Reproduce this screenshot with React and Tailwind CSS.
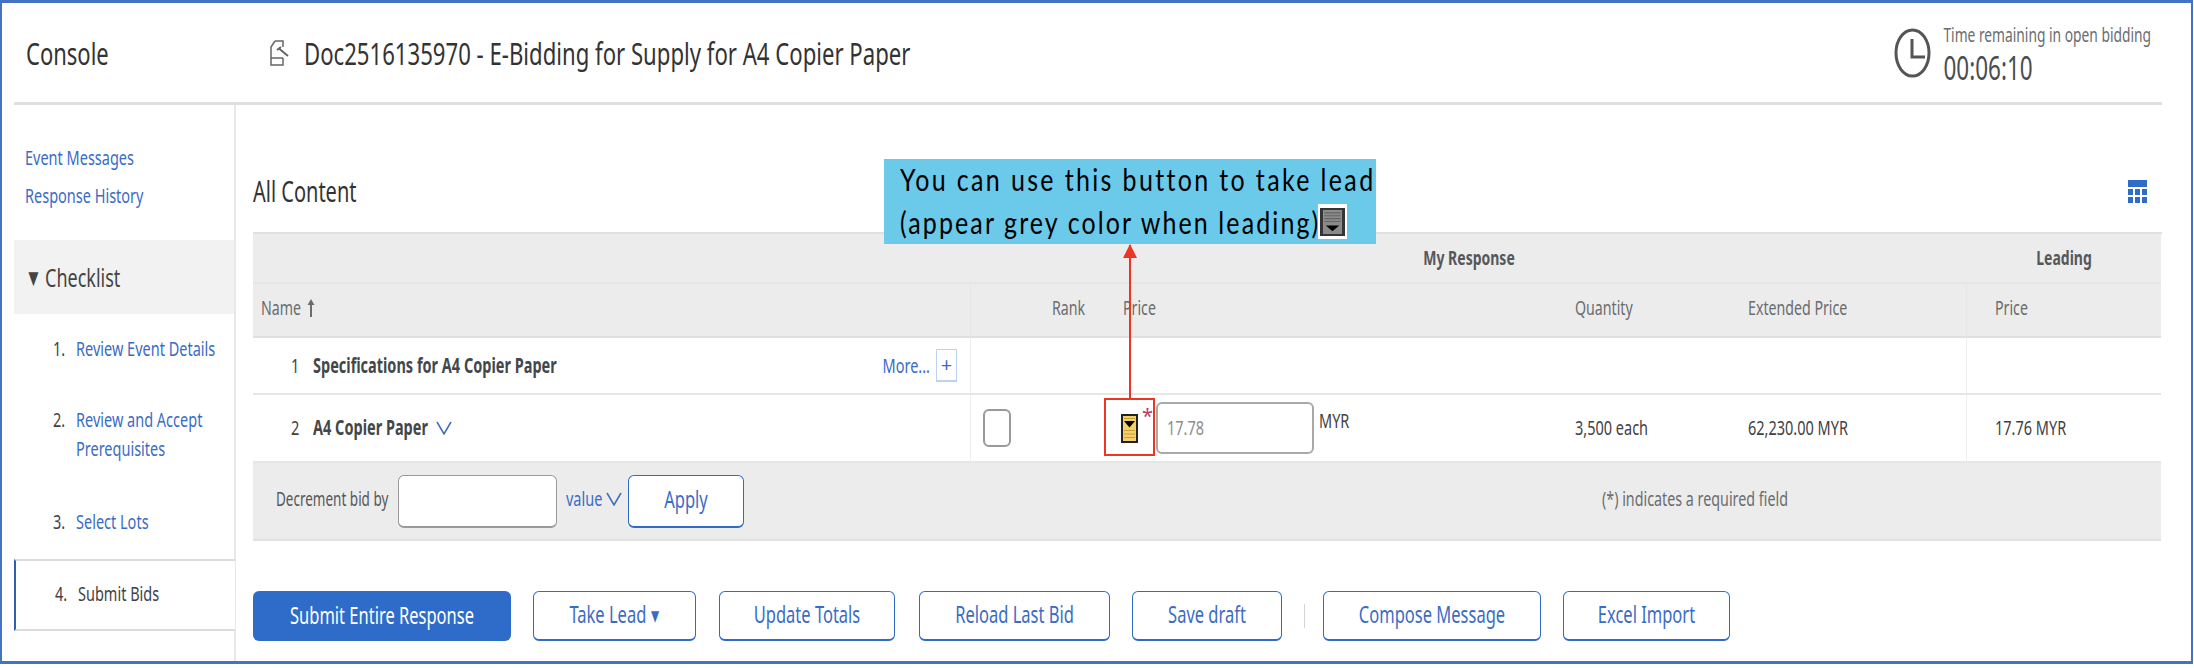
const link = "text-[#3a6cc4]";
const dark = "text-[#3f4144]";

function T({ className = "", children }) {
  return <span className={`inline-block scale-y-[1.42] whitespace-nowrap ${className}`}>{children}</span>;
}

function Chevron({ className = "" }) {
  return (
    <svg className={className} width="16" height="14" viewBox="0 0 16 14" fill="none" stroke="#3a6cc4" strokeWidth="1.5">
      <path d="M1 1 L8 13 L15 1" />
    </svg>
  );
}

function LeadIcon({ grey = false }) {
  const fill = grey ? "#8a8a8a" : "#f4cf6b";
  const line = grey ? "#666" : "#c9a030";
  const frame = grey ? "#333" : "#222";
  return (
    <svg className="shrink-0" width={grey ? 25 : 17} height={grey ? 28 : 29} viewBox="0 0 17 29" preserveAspectRatio="none">
      <rect x="1" y="1" width="15" height="27" fill={fill} stroke={frame} strokeWidth="2" />
      <path d={grey ? "M3 5H14M3 8H14M3 11H14M3 14H14" : "M3 4.5H14M3 16.5H14M3 20H14M3 23.5H14"} stroke={line} strokeWidth="1.2" />
      <path d={grey ? "M4 18H13L8.5 24Z" : "M3 7H14L8.5 13.5Z"} fill="#000" />
    </svg>
  );
}

function Btn({ className = "", children }) {
  return (
    <button className={`h-[50px] rounded-md border border-b-2 border-[#2f6bc9] bg-white flex items-center justify-center text-[16.5px] ${link} ${className}`}>
      <T>{children}</T>
    </button>
  );
}

function Step({ n, h, active, top, children }) {
  return (
    <div
      className={`flex pl-[39px] ${top ? "items-start pt-[19px]" : "items-center pb-[3px]"} ${h} ${
        active ? "border-l-2 border-t-2 border-b-2 border-l-[#2f5fb0] border-t-[#dcdcdc] border-b-[#dcdcdc] -mr-px bg-white" : ""
      }`}
    >
      <T className={`w-[23px] text-[14.5px] leading-[29px] ${dark}`}>{n}</T>
      <div className={`text-[14.5px] leading-[29px] ${active ? dark : link}`}>{children}</div>
    </div>
  );
}

function Th({ className = "", children }) {
  return (
    <div className={`h-[54px] border-b-2 border-[#e0e0e0] bg-[#ececec] flex items-center pb-[4px] text-[14.2px] text-[#6a6d70] ${className}`}>
      {children}
    </div>
  );
}

function Td({ className = "", children }) {
  return <div className={`flex items-center border-b-2 border-[#e6e6e6] text-[14.5px] ${dark} ${className}`}>{children}</div>;
}

export default function App() {
  return (
    <div className="relative w-[2194px] h-[668px] bg-white overflow-hidden [font-family:'Noto_Sans',sans-serif]">
      <div className="w-[2193px] h-[664px] border-2 border-t-[3px] border-b-[3px] border-[#4472c4] pl-3 pr-[29px] flex flex-col">
        <header className="h-[102px] shrink-0 border-b-[3px] border-[#e0e0e0] flex items-center">
          <div className="w-[256px] pl-3">
            <T className="text-[22px] text-[#333]">Console</T>
          </div>
          <svg width="20" height="28" viewBox="0 0 20 28" fill="none" stroke="#666" strokeWidth="1.5" className="shrink-0">
            <path d="M5 2H13V8M5 2L1 8V26H13V19M1 19H13" />
            <path d="M7 11L11 8M9 9.5L18 17" strokeWidth="2" />
          </svg>
          <T className="ml-[14px] text-[22.15px] text-[#333]">Doc2516135970 - E-Bidding for Supply for A4 Copier Paper</T>
          <div className="ml-auto flex items-center">
            <svg width="37" height="50" viewBox="0 0 37 50" fill="none" stroke="#555" strokeWidth="3">
              <ellipse cx="18.5" cy="25" rx="16.5" ry="23" />
              <path d="M18 11V29H31" />
            </svg>
            <div className="ml-[12px] mr-[11px] flex flex-col">
              <T className="text-[13.8px] text-[#6a6d70] h-[33px] leading-[32px]">Time remaining in open bidding</T>
              <T className="text-[22.5px] text-[#4a4c4f] h-[34px] leading-[34px]">00:06:10</T>
            </div>
          </div>
        </header>

        <div className="flex flex-1 min-h-0">
          <aside className="w-[222px] shrink-0 border-r-2 border-[#e8e8e8]">
            <div className="h-[135px] pt-[34px]">
              <div className={`h-[38px] pl-[11px] flex items-center text-[14.5px] ${link}`}><T>Event Messages</T></div>
              <div className={`h-[38px] pl-[11px] flex items-center text-[14.5px] ${link}`}><T>Response History</T></div>
            </div>
            <div className="h-[74px] bg-[#f2f2f2] pl-[11px] flex items-center text-[18px] text-[#444]">
              <T className="w-[20px] text-[17px]">▼</T>
              <T>Checklist</T>
            </div>
            <Step n="1." h="h-[72px]"><T>Review Event Details</T></Step>
            <Step n="2." h="h-[100px]" top>
              <T>Review and Accept</T>
              <br />
              <T>Prerequisites</T>
            </Step>
            <Step n="3." h="h-[73px]"><T>Select Lots</T></Step>
            <Step n="4." h="h-[72px]" active><T>Submit Bids</T></Step>
          </aside>

          <main className="flex-1 pl-[17px] min-w-0">
            <div className="h-[127px] pt-[47px] flex items-center justify-between pr-[15px]">
              <T className="text-[20px] text-[#333]">All Content</T>
              <svg width="19" height="24" viewBox="0 0 19 24" fill="#2f6bc9">
                <rect width="19" height="7" />
                <rect y="9" width="5" height="6" />
                <rect x="7" y="9" width="5" height="6" />
                <rect x="14" y="9" width="5" height="6" />
                <rect y="17" width="5" height="6" />
                <rect x="7" y="17" width="5" height="6" />
                <rect x="14" y="17" width="5" height="6" />
              </svg>
            </div>

            <div className="grid grid-cols-[718px_133px_471px_173px_219px_194px] border-t-2 border-[#e0e0e0]">
              <div className="col-span-6 grid grid-cols-[718px_996px_194px] h-[50px] bg-[#ececec] border-b-2 border-[#e6e6e6] text-[14px] font-bold text-[#55585b]">
                <div />
                <div className="flex items-center justify-center pb-[2px]"><T>My Response</T></div>
                <div className="flex items-center justify-center pb-[2px]"><T>Leading</T></div>
              </div>

              <Th className="pl-[8px] border-r border-r-[#e6e6e6]">
                <T>Name</T>
                <svg className="ml-[6px]" width="8" height="18" viewBox="0 0 8 18" fill="#6a6d70">
                  <path d="M4 0L7.5 6H5V18H3V6H0.5Z" />
                </svg>
              </Th>
              <Th className="pl-[81px]"><T>Rank</T></Th>
              <Th className="pl-[19px]"><T>Price</T></Th>
              <Th><T>Quantity</T></Th>
              <Th className="border-r border-r-[#e6e6e6]"><T>Extended Price</T></Th>
              <Th className="pl-[28px]"><T>Price</T></Th>

              <Td className="h-[57px] pl-[38px] pr-[13px] border-r border-r-[#eeeeee]">
                <T className="w-[22px]">1</T>
                <T className="font-bold text-[#44474a]">Specifications for A4 Copier Paper</T>
                <T className={`ml-auto ${link}`}>More...</T>
                <div className={`ml-[6px] w-[21px] h-[33px] border border-b-2 border-[#bcd3ee] flex items-center justify-center text-[20px] ${link}`}>+</div>
              </Td>
              <Td className="col-span-4 border-r border-r-[#eeeeee]" />
              <Td />

              <Td className="h-[68px] pl-[38px] border-r border-r-[#eeeeee]">
                <T className="w-[22px]">2</T>
                <T className="font-bold text-[#44474a]">A4 Copier Paper</T>
                <Chevron className="ml-2" />
              </Td>
              <Td className="pl-3">
                <div className="w-[28px] h-[38px] rounded-md border-2 border-[#9a9a9a]" />
              </Td>
              <Td className="pl-[17px]">
                <LeadIcon />
                <div className="relative w-[18px] h-full">
                  <span className="absolute left-[4px] top-[9px] text-[20px] leading-[24px] text-[#b5405a]">*</span>
                </div>
                <div className="w-[158px] h-[52px] rounded-md border-2 border-[#a9a9a9] flex items-center pl-[9px] text-[#8a8d90]">
                  <T>17.78</T>
                </div>
                <T className="ml-[5px] -mt-[14px]">MYR</T>
              </Td>
              <Td><T>3,500 each</T></Td>
              <Td className="border-r border-r-[#eeeeee]"><T>62,230.00 MYR</T></Td>
              <Td className="pl-[28px]"><T>17.76 MYR</T></Td>

              <div className="col-span-6 h-[78px] bg-[#ececec] border-b-2 border-[#e0e0e0] flex items-center pl-[23px] text-[14.5px]">
                <T className="w-[122px] -mt-[4px] text-[13.5px] text-[#55585b]">Decrement bid by</T>
                <div className="w-[159px] h-[53px] bg-white rounded-md border border-b-2 border-[#9a9a9a]" />
                <T className={`ml-[9px] w-[40px] -mt-[4px] ${link}`}>value</T>
                <Chevron className="-mt-[4px]" />
                <button className={`ml-[6px] w-[116px] h-[53px] bg-white rounded-md border border-b-2 border-[#2f6bc9] text-[16.5px] ${link}`}>
                  <T>Apply</T>
                </button>
                <T className="ml-[858px] -mt-[4px] text-[#6a6d70] text-[14.3px]">(*) indicates a required field</T>
              </div>
            </div>

            <div className="mt-[50px] flex items-center">
              <button className="w-[258px] h-[50px] rounded-md bg-[#2f6bc9] text-white text-[16.5px]">
                <T>Submit Entire Response</T>
              </button>
              <Btn className="ml-[22px] w-[163px]">Take Lead ▾</Btn>
              <Btn className="ml-[23px] w-[176px]">Update Totals</Btn>
              <Btn className="ml-[24px] w-[191px]">Reload Last Bid</Btn>
              <Btn className="ml-[22px] w-[150px]">Save draft</Btn>
              <div className="ml-[22px] w-px h-[24px] bg-[#d5d5d5]" />
              <Btn className="ml-[18px] w-[218px]">Compose Message</Btn>
              <Btn className="ml-[22px] w-[167px]">Excel Import</Btn>
            </div>
          </main>
        </div>
      </div>

      <div className="absolute left-[884px] top-[159px] w-[492px] h-[85px] bg-[#6bc9ea] pl-4 text-black [font-family:Lato,sans-serif] text-[25px]">
        <div className="h-[42px] flex items-center tracking-[2.35px]">
          <span className="inline-block scale-y-[1.25] whitespace-nowrap">You can use this button to take lead</span>
        </div>
        <div className="h-[43px] flex items-center tracking-[2.1px]">
          <span className="inline-block scale-y-[1.25] whitespace-nowrap">(appear grey color when leading)</span>
        </div>
        <div className="absolute left-[434px] top-[45px] w-[29px] h-[35px] bg-white flex items-center justify-center">
          <LeadIcon grey />
        </div>
      </div>

      <div className="absolute left-[1129px] top-[245px] w-[2px] h-[153px] bg-[#ee3524]" />
      <svg className="absolute left-[1123px] top-[244px]" width="14" height="14" viewBox="0 0 14 14">
        <path d="M7 0L14 14H0Z" fill="#ee3524" />
      </svg>
      <div className="absolute left-[1104px] top-[398px] w-[51px] h-[58px] border-2 border-[#ee3524]" />
    </div>
  );
}
